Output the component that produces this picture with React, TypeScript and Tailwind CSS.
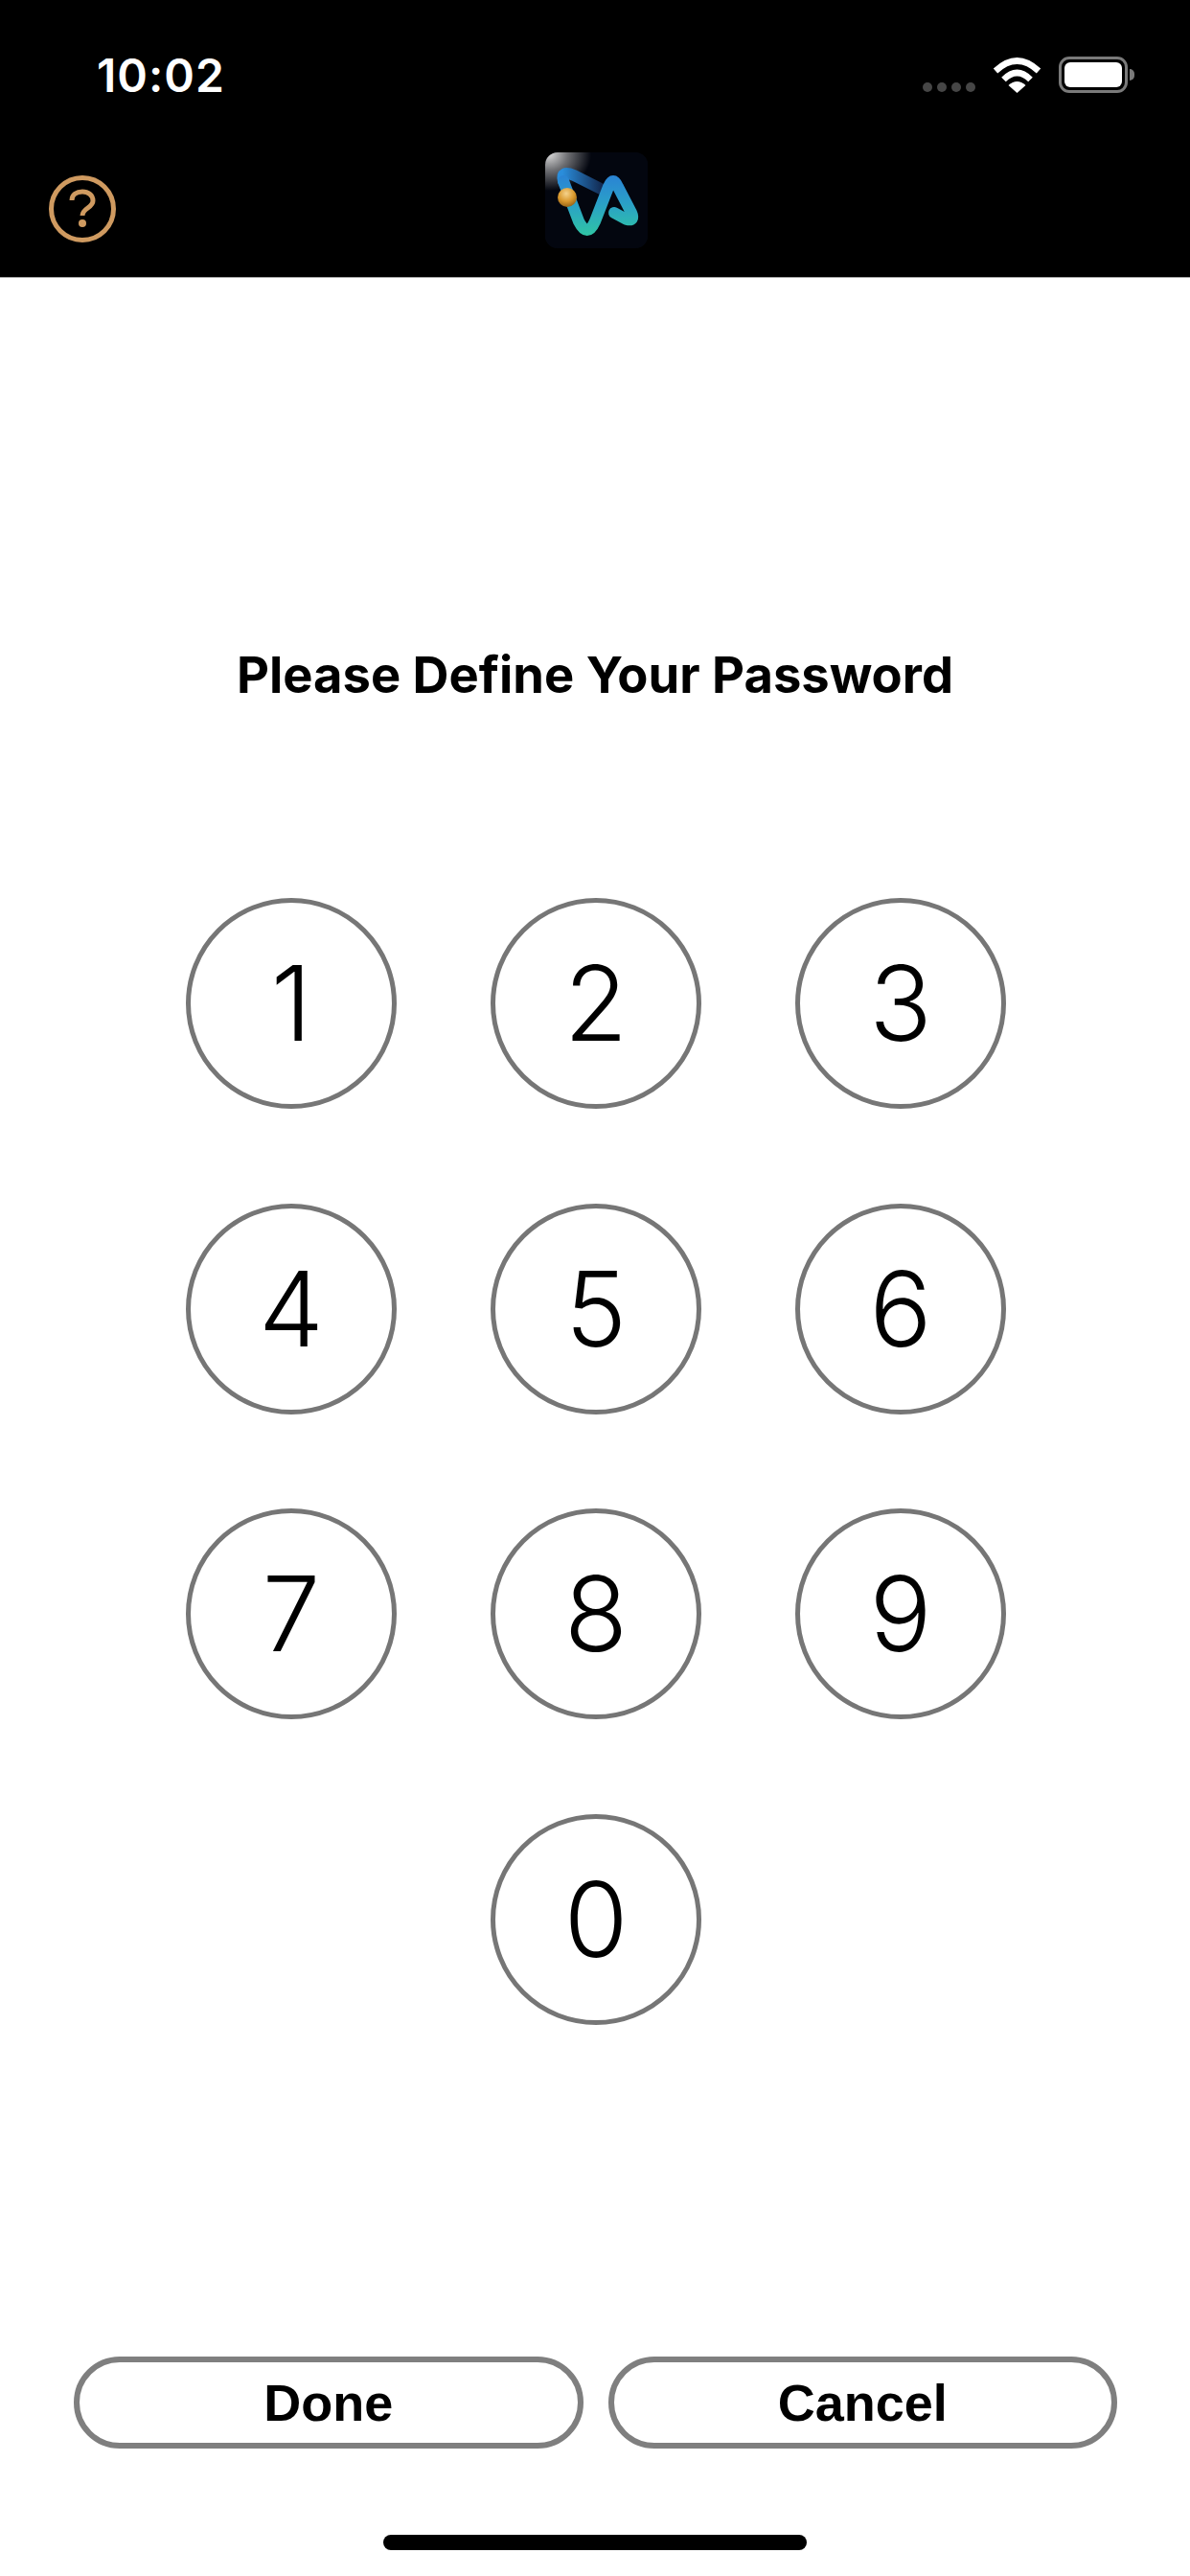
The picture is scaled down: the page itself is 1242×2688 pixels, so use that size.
const digits = ['1', '2', '3', '4', '5', '6', '7', '8', '9'];

function KeyButton({ label }: { label: string }) {
  return (
    <button className="w-[220px] h-[220px] rounded-full border-[5px] border-[#767676] bg-white flex items-center justify-center text-black text-[108px] leading-none font-light font-['Inter',sans-serif]">
      {label}
    </button>
  );
}

function WifiIcon() {
  return (
    <svg width="51" height="38" viewBox="0 0 51 38" fill="none">
      <path d="M3 15Q25.5 -6 48 15" stroke="white" strokeWidth="6.5" />
      <path d="M11.5 24Q25.5 10 39.5 24" stroke="white" strokeWidth="6.5" />
      <path d="M25.5 38L16.5 30Q25.5 22 34.5 30Z" fill="white" />
    </svg>
  );
}

function Battery() {
  return (
    <div className="flex items-center">
      <div className="w-[72px] h-[38px] rounded-[11px] border-[3px] border-[#7a7a7a] p-[3px]">
        <div className="w-full h-full rounded-[6px] bg-white" />
      </div>
      <div className="w-[5px] h-[12px] ml-[2px] rounded-r-full bg-[#7a7a7a]" />
    </div>
  );
}

function HelpIcon() {
  return (
    <svg width="70" height="70" viewBox="0 0 70 70" fill="none" stroke="#cf9a60">
      <circle cx="35" cy="35" r="32.5" strokeWidth="5" />
      <path d="M24 26C24 20 29 17 35 17C41 17 46 20.5 46 26.5C46 34 35 34 35 42" strokeWidth="5" />
      <circle cx="35" cy="50" r="4" fill="#cf9a60" stroke="none" />
    </svg>
  );
}

function Logo() {
  return (
    <svg width="107" height="100" viewBox="0 0 107 100" fill="none">
      <defs>
        <radialGradient id="shine" cx="0" cy="0" r="1" gradientUnits="userSpaceOnUse" gradientTransform="translate(4 2) scale(44 38)">
          <stop offset="0" stopColor="#d8d8d8" />
          <stop offset="0.45" stopColor="#6d6e72" />
          <stop offset="1" stopColor="#03060f" />
        </radialGradient>
        <linearGradient id="ribbon" x1="0" y1="20" x2="0" y2="85" gradientUnits="userSpaceOnUse">
          <stop offset="0" stopColor="#2a7fd6" />
          <stop offset="0.5" stopColor="#2a9fc8" />
          <stop offset="1" stopColor="#2fc3a6" />
        </linearGradient>
        <linearGradient id="ribbonTop" x1="18" y1="0" x2="60" y2="0" gradientUnits="userSpaceOnUse">
          <stop offset="0" stopColor="#2a8ddb" />
          <stop offset="1" stopColor="#12284f" />
        </linearGradient>
        <radialGradient id="ball" cx="0.45" cy="0.3" r="0.75">
          <stop offset="0" stopColor="#f5d28c" />
          <stop offset="0.55" stopColor="#d9982c" />
          <stop offset="1" stopColor="#8a5a14" />
        </radialGradient>
      </defs>
      <rect width="107" height="100" rx="13" fill="#03060f" />
      <rect width="107" height="100" rx="13" fill="url(#shine)" />
      <path d="M58 38L30 24Q16 18 19 30" stroke="url(#ribbonTop)" strokeWidth="12" strokeLinecap="round" />
      <path d="M19 30L35 72Q44 90 52 72L66 36Q71 24 76 36L90 63Q94 72 85 70L72 63" stroke="url(#ribbon)" strokeWidth="12" strokeLinecap="round" strokeLinejoin="round" />
      <circle cx="23" cy="47" r="10" fill="url(#ball)" />
    </svg>
  );
}

export default function App() {
  return (
    <div className="w-[1242px] h-[2688px] bg-white flex flex-col font-['Inter',sans-serif]">
      <header className="h-[290px] bg-black border-b border-[#a6a6a6]">
        <div className="h-[150px] flex items-start justify-between pl-[101px] pr-[58px] pt-[59px]">
          <span className="text-white text-[48px] leading-[40px] font-semibold tracking-[1px]">10:02</span>
          <div className="flex items-end gap-[18px]">
            <div className="flex gap-[5px] mb-[1px]">
              <span className="w-[10px] h-[10px] rounded-full bg-[#464646]" />
              <span className="w-[10px] h-[10px] rounded-full bg-[#464646]" />
              <span className="w-[10px] h-[10px] rounded-full bg-[#464646]" />
              <span className="w-[10px] h-[10px] rounded-full bg-[#464646]" />
            </div>
            <WifiIcon />
            <Battery />
          </div>
        </div>
        <div className="relative h-[139px]">
          <div className="pl-[51px] pt-[33px]">
            <HelpIcon />
          </div>
          <div className="absolute left-[569px] top-[9px]">
            <Logo />
          </div>
        </div>
      </header>

      <main className="flex-1 flex flex-col items-center">
        <h1 className="mt-[384px] text-[52.5px] leading-[60px] font-bold text-black">
          Please Define Your Password
        </h1>
        <div className="mt-[203px] ml-[2px] grid grid-cols-3 gap-x-[98px] gap-y-[98.5px]">
          {digits.map((d) => (
            <KeyButton key={d} label={d} />
          ))}
          <div className="col-start-2">
            <KeyButton label="0" />
          </div>
        </div>
      </main>

      <footer className="flex flex-col items-center">
        <div className="w-full flex gap-[26px] pl-[77px] pr-[76px]">
          <button className="flex-1 h-[96px] rounded-full border-[6px] border-[#7f7f7f] bg-white text-black text-[54px] font-bold font-['Liberation_Sans',sans-serif]">
            Done
          </button>
          <button className="flex-1 h-[96px] rounded-full border-[6px] border-[#7f7f7f] bg-white text-black text-[54px] font-bold font-['Liberation_Sans',sans-serif]">
            Cancel
          </button>
        </div>
        <div className="mt-[90px] mb-[27px] w-[442px] h-[16px] rounded-full bg-black" />
      </footer>
    </div>
  );
}
